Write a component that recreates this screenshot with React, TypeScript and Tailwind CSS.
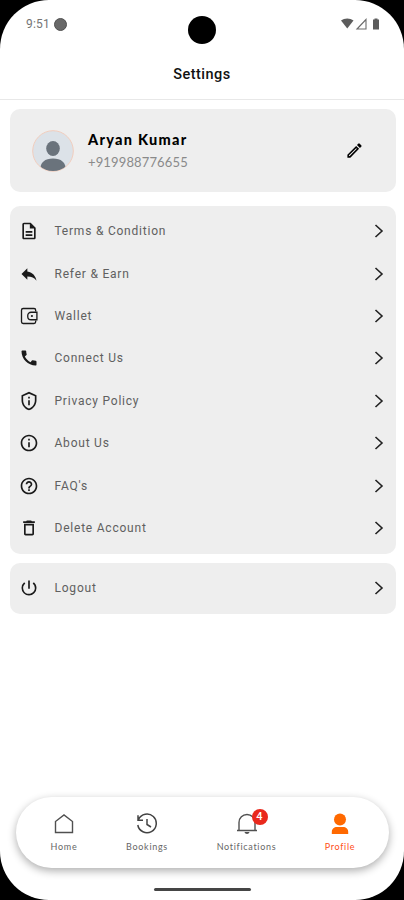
import React from 'react';
import {
  MdCall,
  MdDeleteOutline,
  MdHelpOutline,
  MdInfoOutline,
  MdOutlineDescription,
  MdOutlineEdit,
  MdOutlinePrivacyTip,
  MdPowerSettingsNew,
  MdReply,
} from 'react-icons/md';

type IconProps = { className?: string };
type Item = { label: string; icon: React.ComponentType<IconProps> };

function WalletIcon({ className }: IconProps) {
  return (
    <svg className={className} viewBox="0 0 24 24" fill="none" stroke="currentColor" strokeWidth="1.6">
      <path d="M20 6.500V5a2 2 0 0 0-2-2H5a2 2 0 0 0-2 2v14a2 2 0 0 0 2 2h13a2 2 0 0 0 2-2v-1.500" />
      <path d="M21.500 7.500h-7a4 4 0 0 0-4 4v1a4 4 0 0 0 4 4h7Z" />
      <circle cx="15.500" cy="12" r="1.300" fill="currentColor" stroke="none" />
    </svg>
  );
}

const items: Item[] = [
  { label: 'Terms & Condition', icon: MdOutlineDescription },
  { label: 'Refer & Earn', icon: MdReply },
  { label: 'Wallet', icon: WalletIcon },
  { label: 'Connect Us', icon: MdCall },
  { label: 'Privacy Policy', icon: MdOutlinePrivacyTip },
  { label: 'About Us', icon: MdInfoOutline },
  { label: "FAQ's", icon: MdHelpOutline },
  { label: 'Delete Account', icon: MdDeleteOutline },
];

function Row({ item }: { item: Item }) {
  const Icon = item.icon;
  return (
    <div className="flex h-[42.4px] items-center pl-[9px] pr-[12.500px]">
      <Icon className="size-5 shrink-0 text-[#1a1a1a]" />
      <span className="ml-[16px] grow text-[12px] leading-4 tracking-[0.78px] text-[#606060]">{item.label}</span>
      <svg width="10" height="14" viewBox="0 0 10 14" fill="none" stroke="#222" strokeWidth="1.6">
        <path d="M1.500 1 8 7l-6.500 6" />
      </svg>
    </div>
  );
}

function StatusBar() {
  return (
    <div className="relative flex h-12 items-center justify-between pl-[26px] pr-[23px]">
      <div className="flex items-center gap-[4px]">
        <span className="text-[12px] leading-4 tracking-[0.2px] text-[#757575]">9:51</span>
        <span className="size-[13px] rounded-full border border-[#505050] bg-[#686868]" />
      </div>
      <div className="absolute left-1/2 top-[16px] size-7 -translate-x-1/2 rounded-full bg-black" />
      <svg width="40" height="14" viewBox="0 0 40 14">
        <path d="M0 3.500C3.500.700 9 .700 12.500 3.500L6.250 11.500Z" fill="#5c5c5c" />
        <path d="M16 12 25 2.500V12Z" fill="none" stroke="#6c6c6c" strokeWidth="1.100" />
        <path d="M33.500 1.500h3v1h1.500v10h-6v-10h1.500Z" fill="#5c5c5c" />
      </svg>
    </div>
  );
}

function NavItem({ label, width, className, children }: { label: string; width: string; className: string; children: React.ReactNode }) {
  return (
    <div className={`flex flex-col items-center ${width} ${className}`}>
      <div className="relative flex h-6 items-center justify-center">{children}</div>
      <span className="mt-[5px] whitespace-nowrap font-['Lato',sans-serif] text-[9px] leading-3 tracking-[0.7px]">{label}</span>
    </div>
  );
}

export default function App() {
  return (
    <div className="h-[900px] w-[404px] bg-black font-['Roboto',sans-serif]">
      <div className="flex h-full flex-col overflow-hidden rounded-[49px] bg-white">
        <StatusBar />
        <header className="flex h-[52px] items-center justify-center border-b border-[#e8e8e8] pt-[2px]">
          <h1 className="text-[14.5px] font-medium leading-5 tracking-[0.45px] text-[#111]">Settings</h1>
        </header>

        <section className="ml-[9.500px] mr-2 mt-[9px] flex h-[83px] items-center rounded-[10px] bg-[#eee] pl-[22.500px] pr-[32px]">
          <svg width="42" height="42" viewBox="0 0 42 42">
            <defs>
              <clipPath id="avatar">
                <circle cx="21" cy="21" r="20" />
              </clipPath>
            </defs>
            <circle cx="21" cy="21" r="20.300" fill="#dce2e8" stroke="#f1cdbd" strokeWidth="1" />
            <g clipPath="url(#avatar)" fill="#6a737c">
              <ellipse cx="21" cy="18.500" rx="6.800" ry="7.500" />
              <path d="M8 41c0-9 5-12.500 13-12.500S34 32 34 41Z" />
            </g>
          </svg>
          <div className="ml-[14px] grow font-['Lato',sans-serif]">
            <div className="text-[14.5px] font-black leading-5 tracking-[1.3px] text-black">Aryan Kumar</div>
            <div className="mt-[2px] text-[13px] leading-5 tracking-[0.14px] text-[#8a8a8a]">+919988776655</div>
          </div>
          <MdOutlineEdit className="size-[19px] text-black" />
        </section>

        <section className="ml-[9.500px] mr-2 mt-[14px] h-[347.500px] rounded-[10px] bg-[#eee] pt-[4px]">
          {items.map((item) => (
            <Row key={item.label} item={item} />
          ))}
        </section>

        <section className="ml-[9.500px] mr-2 mt-[9.500px] flex h-[51px] flex-col justify-center rounded-[10px] bg-[#eee]">
          <Row item={{ label: 'Logout', icon: MdPowerSettingsNew }} />
        </section>

        <nav className="ml-4 mr-[15px] mt-auto flex h-[71px] shrink-0 rounded-full bg-white pl-[15px] pt-[15px] shadow-[0_3px_8px_rgba(0,0,0,0.32)]">
          <NavItem label="Home" width="w-[66px]" className="text-[#666]">
            <svg width="20" height="20" viewBox="0 0 20 20" fill="none" stroke="#505050" strokeWidth="1.400">
              <path d="M1.500 18.500V7.500L10 1l8.500 6.500v11Z" />
            </svg>
          </NavItem>
          <NavItem label="Bookings" width="w-[100px]" className="text-[#666]">
            <svg width="22" height="22" viewBox="0 0 22 22" fill="none" stroke="#444" strokeWidth="1.500">
              <path d="M2.500 6.500A9.300 9.300 0 1 1 1.800 12M2 2.200v5h5M11 6v5.500l4 2.500" />
            </svg>
          </NavItem>
          <NavItem label="Notifications" width="w-[99px]" className="text-[#666]">
            <svg width="22" height="22" viewBox="0 0 22 22" fill="none" stroke="#505050" strokeWidth="1.400">
              <path d="M1 17.500h20M3 17.500V9.500a8 8 0 0 1 16 0v8" />
              <path d="M8.500 19h5c-.5 2.500-4.500 2.500-5 0Z" fill="#505050" stroke="none" />
            </svg>
            <span className="absolute -right-[10px] -top-[3px] flex size-4 items-center justify-center rounded-full bg-[#e9291d] text-[11px] font-medium leading-4 text-white">
              4
            </span>
          </NavItem>
          <NavItem label="Profile" width="w-[88px]" className="text-[#ff4d17]">
            <svg width="18" height="22" viewBox="0 0 18 22" fill="#ff6900">
              <circle cx="9" cy="6.500" r="6" />
              <path d="M.8 21v-2c0-3.500 2.500-5 5-5h6.400c2.500 0 5 1.500 5 5v2Z" />
            </svg>
          </NavItem>
        </nav>
        <div className="mx-auto mb-[9px] mt-[20px] h-[3px] w-[97px] shrink-0 rounded-full bg-[#454545]" />
      </div>
    </div>
  );
}
